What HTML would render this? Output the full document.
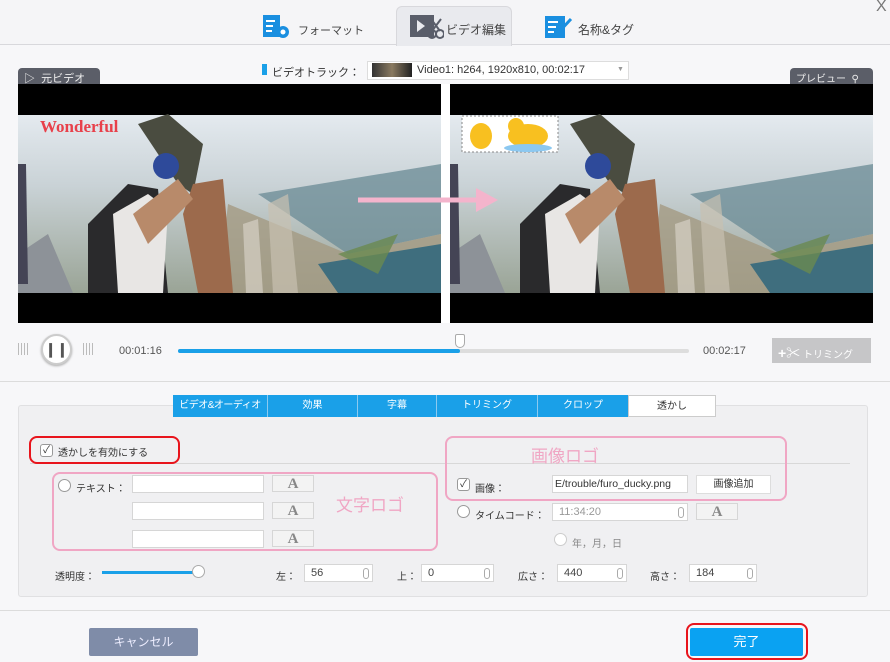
<!DOCTYPE html>
<html><head><meta charset="utf-8"><style>
*{margin:0;padding:0;box-sizing:border-box}
body{width:890px;height:662px;background:#f7f7f9;font-family:"Liberation Sans","Noto Sans CJK JP",sans-serif;font-size:10px;color:#333;position:relative;overflow:hidden}
.a{position:absolute;white-space:nowrap}
.inp{position:absolute;background:#fff;border:1px solid #d6d6d6;height:18px;font-size:11px;padding:2px 6px;color:#444;white-space:nowrap;overflow:hidden}
.btnA{position:absolute;width:42px;height:17px;border:1px solid #d6d6d6;background:#f3f3f3;text-align:center;font-family:"Liberation Serif",serif;font-weight:bold;font-size:15px;line-height:16px;color:#888}
.cb{position:absolute;width:13px;height:13px;border:1px solid #999;border-radius:3px;background:#fff;font-size:10px;line-height:11px;text-align:center;color:#333}
.pink{position:absolute;border:2px solid #f0a6c4;border-radius:8px}
.red{position:absolute;border:2px solid #e8141c;border-radius:8px}
.spin{position:absolute;right:3px;top:3px;width:6px;height:11px;border:1px solid #aaa;border-radius:3px}
</style></head><body>
<div class="a" style="left:0;top:0;width:890px;height:45px;background:#f5f5f7;border-bottom:1px solid #d8d8dc"></div>
<div class="a" style="left:396px;top:6px;width:116px;height:40px;background:#e9eaee;border:1px solid #d8d8dc;border-bottom:none;border-radius:6px 6px 0 0"></div>
<div class="a" style="left:876px;top:-2px;font-size:16px;color:#777">X</div>
<svg class="a" style="left:263px;top:15px" width="30" height="24"><rect x="0" y="0" width="17" height="22" fill="#1a8fe0"/><rect x="3" y="5" width="9" height="2" fill="#fff"/><rect x="3" y="10" width="7" height="2" fill="#fff"/><rect x="3" y="15" width="6" height="2" fill="#fff"/><circle cx="20" cy="17" r="6" fill="#1a8fe0"/><circle cx="20" cy="17" r="2.5" fill="#fff"/></svg>
<div class="a" style="left:298px;top:22px;font-size:11px;color:#444">フォーマット</div>
<svg class="a" style="left:410px;top:14px" width="34" height="26"><rect x="0" y="1" width="24" height="22" fill="#5a5e6a"/><path d="M7 6 L15 12 L7 18Z" fill="#e9eaee"/><circle cx="22" cy="20" r="4" fill="none" stroke="#5a5e6a" stroke-width="2"/><circle cx="30" cy="20" r="4" fill="none" stroke="#5a5e6a" stroke-width="2"/><path d="M22 17 L31 5 M30 17 L21 5" stroke="#5a5e6a" stroke-width="2"/></svg>
<div class="a" style="left:446px;top:21px;font-size:12px;color:#444">ビデオ編集</div>
<svg class="a" style="left:545px;top:14px" width="30" height="26"><rect x="0" y="2" width="20" height="22" fill="#1a8fe0"/><rect x="3" y="7" width="10" height="2" fill="#fff"/><rect x="3" y="12" width="8" height="2" fill="#fff"/><rect x="3" y="17" width="6" height="2" fill="#fff"/><path d="M12 20 L26 5" stroke="#1a8fe0" stroke-width="3"/></svg>
<div class="a" style="left:578px;top:21px;font-size:12px;color:#444">名称&amp;タグ</div>

<div class="a" style="left:262px;top:64px;width:5px;height:11px;background:#1aa0e8"></div>
<div class="a" style="left:272px;top:64px;font-size:11px;color:#333">ビデオトラック：</div>
<div class="a" style="left:367px;top:61px;width:262px;height:19px;background:#fff;border:1px solid #ddd"></div>
<div class="a" style="left:372px;top:63px;width:40px;height:14px;background:linear-gradient(90deg,#333,#8a7a60,#222)"></div>
<div class="a" style="left:417px;top:64px;font-size:11px;color:#333">Video1: h264, 1920x810, 00:02:17</div>
<div class="a" style="left:617px;top:66px;font-size:7px;color:#999">▼</div>

<div class="a" style="left:18px;top:68px;width:82px;height:17px;background:#5b5e68;border-radius:4px 4px 0 0;color:#eee;font-size:11px;padding:2px 6px">▷&nbsp; 元ビデオ</div>
<div class="a" style="left:790px;top:68px;width:83px;height:17px;background:#5b5e68;border-radius:4px 4px 0 0;color:#eee;font-size:10px;padding:2px 6px">プレビュー &nbsp;⚲</div>

<svg class="a" style="left:18px;top:84px" width="855" height="239">
<defs><linearGradient id="sky" x1="0" y1="0" x2="0" y2="1"><stop offset="0" stop-color="#e4eaef"/><stop offset=".4" stop-color="#c9d2d6"/><stop offset="1" stop-color="#9aa496"/></linearGradient></defs>
<g id="v">
<rect x="0" y="0" width="423" height="239" fill="#000"/>
<rect x="0" y="31" width="423" height="178" fill="url(#sky)"/>
<path d="M240 110 L423 80 L423 150 L330 170Z" fill="#6f8e98" opacity=".8"/>
<path d="M210 120 L330 170 L423 150 L423 209 L200 209Z" fill="#a49a82" opacity=".8"/>
<path d="M300 180 L423 160 L423 209 L320 209Z" fill="#3f6e7e"/>
<path d="M320 170 L380 150 L360 190Z" fill="#6a8a50" opacity=".8"/>
<path d="M0 170 L30 150 L55 209 L0 209Z" fill="#8d9298"/>
<path d="M0 80 L8 80 L10 200 L0 200Z" fill="#445"/>
<path d="M70 140 L110 100 L140 105 L150 209 L70 209Z" fill="#2a2a2c"/>
<path d="M95 130 L130 110 L150 125 L145 209 L100 209Z" fill="#e8e6e4"/>
<path d="M120 40 L150 30 L185 60 L175 110 L160 100Z" fill="#4a4c40"/>
<path d="M175 100 L205 95 L215 209 L180 209 L165 130Z" fill="#9c6a4c"/>
<path d="M115 130 L160 95 L175 115 L130 160Z" fill="#b88a6a"/>
<circle cx="148" cy="82" r="13" fill="#2e4a9a"/>
<path d="M250 120 L270 110 L280 209 L255 209Z" fill="#c8c0b0" opacity=".7"/>
<path d="M225 140 L240 135 L245 209 L228 209Z" fill="#d6d0c4" opacity=".7"/>
</g>
<use href="#v" x="432"/>
<rect x="423" y="0" width="9" height="239" fill="#fff"/>
<path d="M340 116 L465 116" stroke="#f4b4cc" stroke-width="5"/><path d="M458 104 L480 116 L458 128Z" fill="#f4b4cc"/>
<rect x="444" y="32" width="96" height="36" fill="#fff" stroke="#888" stroke-dasharray="2 2"/>
<ellipse cx="463" cy="52" rx="11" ry="13" fill="#f8c020"/><ellipse cx="510" cy="52" rx="20" ry="12" fill="#f8c020"/><ellipse cx="510" cy="64" rx="24" ry="4" fill="#8cc8f0"/><circle cx="498" cy="42" r="8" fill="#f8c020"/>
</svg>
<div class="a" style="left:40px;top:117px;font-family:'Liberation Serif',serif;font-weight:bold;font-size:17px;color:#e8404a">Wonderful</div>

<div class="a" style="left:18px;top:343px;width:12px;height:12px;background:repeating-linear-gradient(90deg,#bbb 0 1px,transparent 1px 3px)"></div>
<div class="a" style="left:41px;top:334px;width:31px;height:31px;border-radius:50%;background:#fff;border:2px solid #ccc;box-shadow:0 1px 2px #aaa;text-align:center;line-height:27px;font-size:14px;font-weight:bold;color:#555">❙❙</div>
<div class="a" style="left:83px;top:343px;width:12px;height:12px;background:repeating-linear-gradient(90deg,#bbb 0 1px,transparent 1px 3px)"></div>
<div class="a" style="left:119px;top:345px;color:#555;font-size:11px">00:01:16</div>
<div class="a" style="left:178px;top:349px;width:511px;height:4px;background:#ddd;border-radius:2px"></div>
<div class="a" style="left:178px;top:349px;width:282px;height:4px;background:#1aa0e8;border-radius:2px"></div>
<div class="a" style="left:455px;top:334px;width:10px;height:14px;background:#fff;border:1px solid #aaa;border-radius:2px 2px 5px 5px"></div>
<div class="a" style="left:703px;top:345px;color:#555;font-size:11px">00:02:17</div>
<div class="a" style="left:772px;top:338px;width:99px;height:25px;background:#c6c6c8;color:#fff;font-size:10px;padding:5px 6px"><b style="font-size:14px">+✂</b> トリミング</div>

<div class="a" style="left:0;top:381px;width:890px;height:1px;background:#dcdcdc"></div>
<div class="a" style="left:18px;top:405px;width:850px;height:192px;background:#f0f0f2;border:1px solid #e0e0e2;border-radius:3px"></div>
<div class="a" style="left:173px;top:395px;height:22px;display:flex;font-size:10px;color:#fff;line-height:22px;text-align:center">
<div style="width:95px;background:#1aa0e8;border-right:1px solid #8ccaf0;letter-spacing:-0.5px;overflow:hidden">ビデオ&amp;オーディオ</div>
<div style="width:90px;background:#1aa0e8;border-right:1px solid #8ccaf0">効果</div>
<div style="width:79px;background:#1aa0e8;border-right:1px solid #8ccaf0">字幕</div>
<div style="width:101px;background:#1aa0e8;border-right:1px solid #8ccaf0">トリミング</div>
<div style="width:90px;background:#1aa0e8">クロップ</div>
<div style="width:88px;background:#fff;color:#333;border:1px solid #ccc">透かし</div></div>

<div class="a" style="left:30px;top:463px;width:820px;height:1px;background:#d8d8d8"></div>
<div class="red" style="left:29px;top:436px;width:151px;height:28px"></div>
<div class="cb" style="left:40px;top:444px">✓</div>
<div class="a" style="left:58px;top:444px">透かしを有効にする</div>

<div class="pink" style="left:52px;top:472px;width:386px;height:79px"></div>
<div class="cb" style="left:58px;top:479px;border-radius:50%"></div>
<div class="a" style="left:76px;top:480px">テキスト：</div>
<div class="inp" style="left:132px;top:475px;width:132px"></div><div class="btnA" style="left:272px;top:475px">A</div>
<div class="inp" style="left:132px;top:502px;width:132px"></div><div class="btnA" style="left:272px;top:502px">A</div>
<div class="inp" style="left:132px;top:530px;width:132px"></div><div class="btnA" style="left:272px;top:530px">A</div>
<div class="a" style="left:336px;top:491px;font-size:17px;color:#f0a6c4">文字ロゴ</div>

<div class="pink" style="left:445px;top:436px;width:342px;height:65px"></div>
<div class="a" style="left:531px;top:442px;font-size:17px;color:#f0a6c4">画像ロゴ</div>
<div class="cb" style="left:457px;top:478px">✓</div>
<div class="a" style="left:475px;top:480px">画像：</div>
<div class="inp" style="left:552px;top:475px;width:136px;padding:2px 2px;color:#333;font-size:10.5px">E/trouble/furo_ducky.png</div>
<div class="a" style="left:696px;top:475px;width:75px;height:19px;background:#fff;border:1px solid #ddd;text-align:center;line-height:17px">画像追加</div>
<div class="cb" style="left:457px;top:505px;border-radius:50%"></div>
<div class="a" style="left:475px;top:507px">タイムコード：</div>
<div class="inp" style="left:552px;top:503px;width:136px;color:#999">11:34:20<span class="spin"></span></div>
<div class="btnA" style="left:696px;top:503px">A</div>
<div class="cb" style="left:554px;top:533px;border-color:#ccc;border-radius:50%"></div>
<div class="a" style="left:572px;top:535px;color:#888">年，月，日</div>

<div class="a" style="left:55px;top:568px">透明度：</div>
<div class="a" style="left:102px;top:571px;width:96px;height:3px;background:#1aa0e8"></div>
<div class="a" style="left:192px;top:565px;width:13px;height:13px;border-radius:50%;background:#fff;border:1px solid #aaa"></div>
<div class="a" style="left:276px;top:568px">左：</div><div class="inp" style="left:304px;top:564px;width:69px">56<span class="spin"></span></div>
<div class="a" style="left:397px;top:568px">上：</div><div class="inp" style="left:421px;top:564px;width:73px">0<span class="spin"></span></div>
<div class="a" style="left:518px;top:568px">広さ：</div><div class="inp" style="left:557px;top:564px;width:70px">440<span class="spin"></span></div>
<div class="a" style="left:650px;top:568px">高さ：</div><div class="inp" style="left:689px;top:564px;width:68px">184<span class="spin"></span></div>

<div class="a" style="left:0;top:610px;width:890px;height:1px;background:#dcdcdc"></div>
<div class="a" style="left:89px;top:628px;width:109px;height:28px;background:#7f8ca8;border-radius:2px;color:#eef;text-align:center;line-height:28px;font-size:12px">キャンセル</div>
<div class="red" style="left:686px;top:623px;width:122px;height:37px"></div>
<div class="a" style="left:690px;top:628px;width:113px;height:28px;background:#0aa2f2;border-radius:2px;color:#fff;text-align:center;line-height:28px;font-size:13px">完了</div>
</body></html>
